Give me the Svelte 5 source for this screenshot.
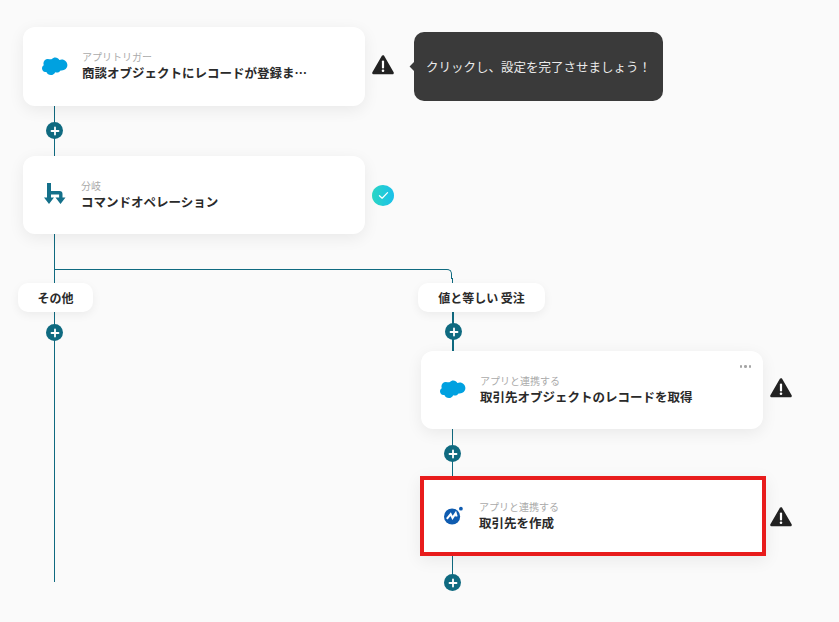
<script>
  const cloud = "M10 4.2c1-1 2.3-1.7 3.8-1.7 2 0 3.7 1.1 4.6 2.7.8-.4 1.7-.6 2.6-.6 3.5 0 6.3 2.8 6.3 6.3S24.500 17 21 17c-.4 0-.9 0-1.300-.1-.8 1.400-2.300 2.400-4 2.400-.7 0-1.400-.2-2-.5-.8 1.900-2.700 3.200-4.800 3.200-2.300 0-4.200-1.400-5-3.400-.3.100-.7.100-1 .1C.3 18.700-1 16.500-1 14.500c0-1.500.8-2.800 2-3.500-.3-.6-.4-1.300-.4-2 0-2.700 2.200-4.900 4.900-4.900 1.700 0 3.200.7 4.500.1z";
</script>

<div class="canvas">
  <div class="line v1"></div>
  <div class="line h1"></div>
  <div class="line v2"></div>
  <div class="line v3"></div>
  <div class="line v4"></div>

  <article class="card c1">
    <svg class="sf" viewBox="-1 2 29 21"><path d={cloud} /></svg>
    <div class="txt">
      <small>アプリトリガー</small>
      <strong>商談オブジェクトにレコードが登録ま…</strong>
    </div>
  </article>

  <article class="card c2">
    <svg class="branch" viewBox="0 0 22 24">
      <path d="M3 0h4v8h8.500a3 3 0 0 1 3 3v5h-3.400v-4.500H7V16H3z" fill="#14708a"/>
      <path d="M0 14.500h10L5 21zM11.500 14.500h10l-5 6.500z" fill="#14708a"/>
    </svg>
    <div class="txt">
      <small>分岐</small>
      <strong>コマンドオペレーション</strong>
    </div>
  </article>

  <article class="card c3">
    <svg class="sf" viewBox="-1 2 29 21"><path d={cloud} /></svg>
    <div class="txt">
      <small>アプリと連携する</small>
      <strong>取引先オブジェクトのレコードを取得</strong>
    </div>
    <span class="dots"><i></i><i></i><i></i></span>
  </article>

  <article class="card c4">
    <svg class="mf" viewBox="0 0 20 20">
      <circle cx="8.500" cy="11" r="8.500" fill="#0f5cb0"/>
      <circle cx="17.800" cy="2.800" r="2" fill="#0f5cb0"/>
      <path d="M3 13.500 7 8.500l2 4 3.300-5 1 3.500" fill="none" stroke="#fff" stroke-width="2.200"/>
    </svg>
    <div class="txt">
      <small>アプリと連携する</small>
      <strong>取引先を作成</strong>
    </div>
  </article>

  <div class="pill p1">その他</div>
  <div class="pill p2">値と等しい 受注</div>

  {#each ['a1','a2','a3','a4','a5'] as a}
    <button class="add {a}" aria-label="追加">
      <svg viewBox="0 0 10 10"><path d="M5 1.500v7M1.500 5h7" stroke="#fff" stroke-width="1.800" stroke-linecap="round"/></svg>
    </button>
  {/each}

  {#each ['w1','w3','w4'] as w}
    <svg class="warn {w}" viewBox="0 0 22 20">
      <path d="M11 1.500 20.500 18h-19z" fill="#222" stroke="#222" stroke-width="2.600" stroke-linejoin="round"/>
      <path d="M11 6.500v6" stroke="#fff" stroke-width="2.200" stroke-linecap="round"/>
      <circle cx="11" cy="15.800" r="1.300" fill="#fff"/>
    </svg>
  {/each}

  <div class="check">
    <svg viewBox="0 0 12 10"><path d="M1.500 5.200 4.500 8l6-6.200" fill="none" stroke="#fff" stroke-width="1.400" stroke-linecap="round" stroke-linejoin="round"/></svg>
  </div>

  <div class="tip">クリックし、設定を完了させましょう！</div>
</div>

<style>
  :global(body) {
    margin: 0;
    background: #fafafa;
  }
  .canvas {
    position: relative;
    width: 839px;
    height: 622px;
    overflow: hidden;
    background: #fafafa;
    font-family: "Noto Sans CJK JP", "Noto Sans", sans-serif;
  }
  .line {
    position: absolute;
    background: #0f6a80;
  }
  .v1 { left: 54px; top: 100px; width: 1px; height: 482px; }
  .h1 {
    left: 54px; top: 269px; width: 398px; height: 10px;
    background: none;
    border-top: 1px solid #0f6a80;
    border-right: 1px solid #0f6a80;
    border-top-right-radius: 5px;
    box-sizing: border-box;
  }
  .v2 { left: 452px; top: 278px; width: 1px; height: 10px; }
  .v3 { left: 452px; top: 310px; width: 1.500px; height: 45px; }
  .v4 { left: 451.500px; top: 425px; width: 1.500px; height: 150px; }

  .card {
    position: absolute;
    box-sizing: border-box;
    width: 342px;
    height: 78px;
    display: flex;
    align-items: center;
    background: #fff;
    border-radius: 12px;
    box-shadow: 0 4px 16px rgba(0, 0, 0, 0.07);
  }
  .c1 { left: 23px; top: 27px; height: 79px; padding-left: 19px; }
  .c2 { left: 23px; top: 156px; padding-left: 21px; }
  .c3 { left: 421px; top: 351px; padding-left: 19px; }
  .c4 {
    left: 420px; top: 476px; width: 346px; height: 80px;
    border: 4px solid #e81c1c;
    border-radius: 0;
    padding-left: 20px;
  }
  .sf { width: 26px; height: 19px; flex: none; margin-top: -1px; fill: #00a1e0; }
  .branch { width: 22px; height: 24px; flex: none; margin-top: -1px; }
  .mf { width: 19px; height: 19px; flex: none; margin-top: -1px; margin-left: 0; }
  .txt {
    display: flex;
    flex-direction: column;
    margin-left: 14px;
    margin-top: -1px;
  }
  .c2 .txt { margin-left: 15px; }
  .c4 .txt { margin-left: 16px; }
  .txt small {
    font-size: 10px;
    line-height: 14px;
    color: #aaa;
  }
  .txt strong {
    font-size: 12.500px;
    line-height: 18px;
    font-weight: 700;
    color: #2a2a2a;
    white-space: nowrap;
  }
  .dots {
    position: absolute;
    right: 12px;
    top: 14px;
    display: flex;
    gap: 2px;
  }
  .dots i { width: 2.500px; height: 2.500px; border-radius: 50%; background: #a5a5a5; }

  .pill {
    position: absolute;
    top: 283px;
    height: 29px;
    display: flex;
    align-items: center;
    justify-content: center;
    background: #fff;
    border-radius: 10px;
    box-shadow: 0 3px 10px rgba(0, 0, 0, 0.06);
    font-size: 12px;
    font-weight: 700;
    color: #2a2a2a;
  }
  .p1 { left: 18px; width: 75px; }
  .p2 { left: 418px; width: 127px; }

  .add {
    position: absolute;
    width: 17px;
    height: 17px;
    padding: 0;
    border: none;
    border-radius: 50%;
    background: #0f6a80;
    display: flex;
    align-items: center;
    justify-content: center;
  }
  .add svg { width: 10px; height: 10px; }
  .a1 { left: 46px; top: 122px; }
  .a2 { left: 46px; top: 324px; }
  .a3 { left: 445px; top: 323px; }
  .a4 { left: 444px; top: 445px; }
  .a5 { left: 444px; top: 574px; }

  .warn { position: absolute; width: 22px; height: 20px; }
  .w1 { left: 372px; top: 55px; }
  .w3 { left: 770px; top: 378px; }
  .w4 { left: 770px; top: 507px; }

  .check {
    position: absolute;
    left: 372px;
    top: 185px;
    width: 22px;
    height: 21px;
    border-radius: 50%;
    background: linear-gradient(90deg, #2bd6c4, #1ac0ea);
    display: flex;
    align-items: center;
    justify-content: center;
  }
  .check svg { width: 11px; height: 9px; }

  .tip {
    position: absolute;
    left: 414px;
    top: 32px;
    width: 249px;
    height: 69px;
    box-sizing: border-box;
    padding-left: 12px;
    display: flex;
    align-items: center;
    border-radius: 10px;
    background: #3a3a3a;
    color: #eaeaea;
    font-size: 12.500px;
    white-space: nowrap;
  }
  .tip::before {
    content: "";
    position: absolute;
    left: -3px;
    top: 31px;
    width: 7px;
    height: 7px;
    background: #3a3a3a;
    transform: rotate(45deg);
  }
</style>
